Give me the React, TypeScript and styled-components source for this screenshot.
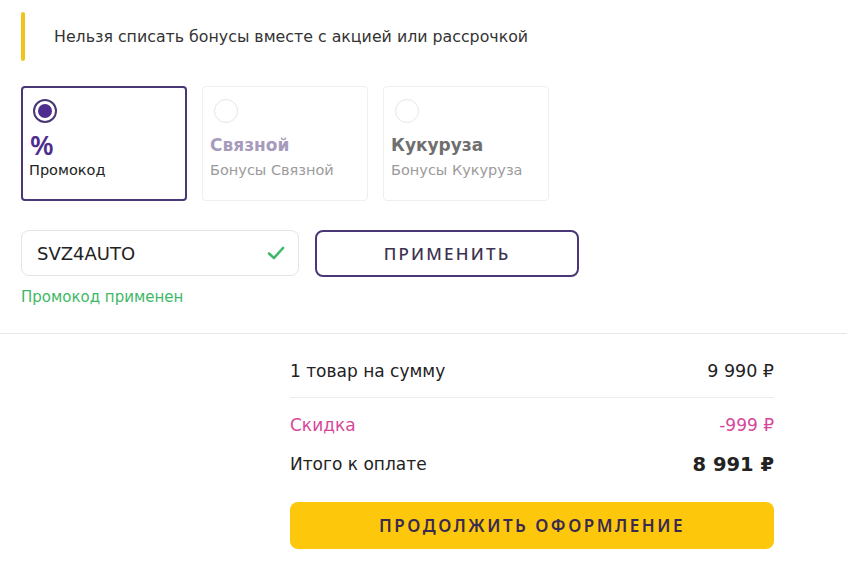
import React from 'react';
import styled, { createGlobalStyle } from 'styled-components';

const GlobalStyle = createGlobalStyle`
  body {
    margin: 0;
    background: #ffffff;
    font-family: 'DejaVu Sans', 'Noto Sans', sans-serif;
    color: #222222;
  }
`;

const Page = styled.div`
  width: 847px;
  height: 567px;
  overflow: hidden;
  background: #fff;
`;

const Top = styled.div`
  padding: 12px 0 0 21px;
`;

const Notice = styled.div`
  display: flex;
  align-items: center;
  gap: 29px;
  height: 49px;
  font-size: 15.8px;
  color: #333;
`;

const NoticeBar = styled.div`
  width: 4px;
  height: 100%;
  border-radius: 2px;
  background: #f0c419;
`;

const Cards = styled.div`
  display: flex;
  gap: 15px;
  margin-top: 25px;
`;

const Card = styled.div<{ active?: boolean }>`
  box-sizing: border-box;
  width: 166px;
  height: 115px;
  border-radius: 4px;
  border: ${(p) => (p.active ? '2px solid #4a3777' : '1px solid #efefef')};
  padding: ${(p) => (p.active ? '11px 6px' : '12px 7px')};
  display: flex;
  flex-direction: column;
`;

const Radio = styled.div<{ checked?: boolean }>`
  box-sizing: border-box;
  width: 24px;
  height: 24px;
  border-radius: 50%;
  margin-left: 4px;
  border: ${(p) => (p.checked ? '2px solid #4a3777' : '1px solid #e6e6e6')};
  display: flex;
  align-items: center;
  justify-content: center;
  &::after {
    content: '';
    display: ${(p) => (p.checked ? 'block' : 'none')};
    width: 14px;
    height: 14px;
    border-radius: 50%;
    background: #4f2d8e;
  }
`;

const Percent = styled.div`
  margin-top: 9px;
  height: 26px;
  font-family: 'Noto Sans', sans-serif;
  font-size: 27px;
  line-height: 26px;
  font-weight: 600;
  color: #4f2d8e;
  padding-left: 1px;
`;

const CardTitle = styled.div<{ tone: string }>`
  margin-top: 11px;
  height: 22px;
  font-size: 17px;
  line-height: 22px;
  font-weight: 700;
  color: ${(p) => p.tone};
`;

const CardSub = styled.div<{ muted?: boolean; gap: number }>`
  margin-top: ${(p) => p.gap}px;
  font-size: 14.5px;
  line-height: 18px;
  color: ${(p) => (p.muted ? '#9b9b9b' : '#222')};
`;

const PromoRow = styled.div`
  display: flex;
  gap: 16px;
  margin-top: 29px;
`;

const InputBox = styled.div`
  box-sizing: border-box;
  width: 278px;
  height: 46px;
  border: 1px solid #e4e4e4;
  border-radius: 8px;
  display: flex;
  align-items: center;
  justify-content: space-between;
  padding: 0 12px 0 15px;
  font-size: 18px;
  color: #222;
`;

const ApplyButton = styled.button`
  box-sizing: border-box;
  width: 264px;
  height: 47px;
  border: 2px solid #4a3777;
  border-radius: 8px;
  background: #fff;
  font-family: 'Noto Sans', sans-serif;
  font-size: 17px;
  font-weight: 500;
  letter-spacing: 2.2px;
  color: #3d3350;
`;

const Success = styled.div`
  margin-top: 10px;
  font-size: 15px;
  line-height: 20px;
  color: #3fb867;
`;

const Divider = styled.div`
  margin-top: 26px;
  height: 1px;
  background: #e8e8e8;
`;

const Summary = styled.div`
  width: 484px;
  margin: 21px 0 0 290px;
`;

const Row = styled.div<{ tone?: string; big?: boolean }>`
  display: flex;
  justify-content: space-between;
  align-items: center;
  height: ${(p) => (p.big ? '46px' : '32px')};
  font-size: 17px;
  color: ${(p) => p.tone || '#222'};
`;

const Amount = styled.span<{ big?: boolean }>`
  font-weight: ${(p) => (p.big ? 700 : 400)};
  font-size: ${(p) => (p.big ? '19.5px' : '17.5px')};
`;

const SumDivider = styled.div`
  height: 1px;
  background: #ececec;
  margin: 10px 0 11px;
`;

const Continue = styled.button`
  width: 100%;
  height: 47px;
  margin-top: 15px;
  border: none;
  border-radius: 8px;
  background: #fdc80b;
  font-family: 'Noto Sans', sans-serif;
  font-size: 17px;
  font-weight: 600;
  letter-spacing: 2.5px;
  color: #3b2a4f;
`;

const Check = () => (
  <svg width="20" height="16" viewBox="0 0 20 16">
    <path d="M3 8.5 L8 13 L17 3" fill="none" stroke="#3fb867" strokeWidth="2.6" strokeLinecap="round" strokeLinejoin="round" />
  </svg>
);

const App = () => (
  <Page>
    <GlobalStyle />
    <Top>
      <Notice>
        <NoticeBar />
        <span>Нельзя списать бонусы вместе с акцией или рассрочкой</span>
      </Notice>
      <Cards>
        <Card active>
          <Radio checked />
          <Percent>%</Percent>
          <CardSub gap={3}>Промокод</CardSub>
        </Card>
        <Card>
          <Radio />
          <CardTitle tone="#a79bbd">Связной</CardTitle>
          <CardSub muted gap={5}>Бонусы Связной</CardSub>
        </Card>
        <Card>
          <Radio />
          <CardTitle tone="#6f6f6f">Кукуруза</CardTitle>
          <CardSub muted gap={5}>Бонусы Кукуруза</CardSub>
        </Card>
      </Cards>
      <PromoRow>
        <InputBox>
          <span>SVZ4AUTO</span>
          <Check />
        </InputBox>
        <ApplyButton>ПРИМЕНИТЬ</ApplyButton>
      </PromoRow>
      <Success>Промокод применен</Success>
    </Top>
    <Divider />
    <Summary>
      <Row>
        <span>1 товар на сумму</span>
        <Amount>9 990 ₽</Amount>
      </Row>
      <SumDivider />
      <Row tone="#d6479a">
        <span>Скидка</span>
        <span>-999 ₽</span>
      </Row>
      <Row big>
        <span>Итого к оплате</span>
        <Amount big>8 991 ₽</Amount>
      </Row>
      <Continue>ПРОДОЛЖИТЬ ОФОРМЛЕНИЕ</Continue>
    </Summary>
  </Page>
);

export default App;
